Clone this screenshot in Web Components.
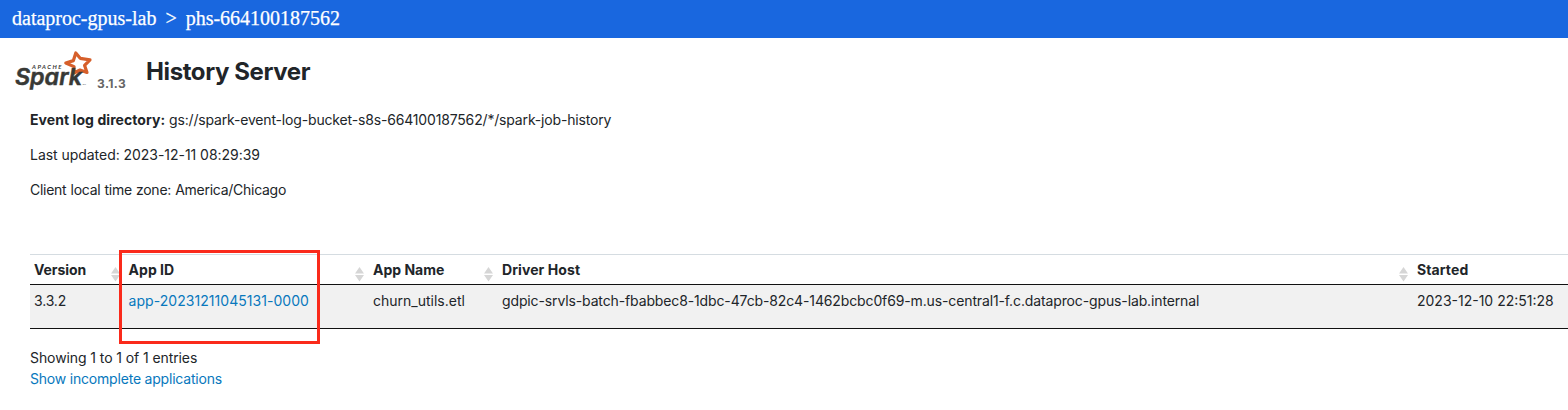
<!DOCTYPE html>
<html lang="en"><head><meta charset="utf-8"><title>History Server</title>
<style>html,body{margin:0;background:#fff;overflow:hidden}body{font:14px/21px Inter,sans-serif;color:#212529}</style></head><body>
<history-page></history-page>
<script>
const define=(name,html)=>customElements.define(name,class extends HTMLElement{constructor(){super();this.attachShadow({mode:'open'}).innerHTML=html}});
define('project-bar',`<style>:host{display:flex;box-sizing:border-box;height:38px;padding:7px 12px 0;background:#1967df;color:#fff;font:20px/22px "Liberation Serif",serif;white-space:pre}span{word-spacing:-.5px;-webkit-text-stroke:.25px #fff}</style><span><slot></slot></span>`);
define('spark-logo',`<style>:host{display:block;width:80px;height:44px}svg{display:block}</style>
<svg width="80" height="44" viewBox="14 49 80 44">
<path d="M75.8 53 L80.2 58.3 L90 59.8 L84.6 65.4 L87 72.4 L80 70 L74 73 L74 66.6 L65.8 63 L73.4 60.6 Z" fill="#fff" stroke="#d65f2b" stroke-width="3.2" stroke-linejoin="round"/>
<g fill="#383936" font-style="italic">
<text x="32" y="68.6" font-family="Lato,sans-serif" font-size="6" font-weight="700" textLength="29.5" lengthAdjust="spacing">APACHE</text>
<text x="15" y="85" font-family="Inter,sans-serif" font-size="22.5" font-weight="600" textLength="67" lengthAdjust="spacingAndGlyphs" style="font-feature-settings:'cv11'" stroke="#383936" stroke-width=".5">Spark</text>
<text x="82.5" y="85.3" font-family="Lato,sans-serif" font-size="2.5">TM</text></g></svg>`);
define('page-heading',`<style>:host{display:flex;height:62px;padding:11px 0 0 14px;box-sizing:border-box}small{font:700 12px/18px Inter,sans-serif;color:#666;margin:26px 0 0 3px;width:49px;letter-spacing:.42px}h1{font:700 24px/29px Inter,sans-serif;margin:8px 0 0;letter-spacing:-.4px;white-space:nowrap}</style><spark-logo></spark-logo><small><slot name="version"></slot></small><h1><slot></slot></h1>`);
define('info-line',`<style>:host{display:block;height:21px;margin-bottom:14px;white-space:pre;letter-spacing:var(--ls,0);word-spacing:var(--ws,0)}::slotted(b){letter-spacing:.07px}</style><slot></slot>`);
define('sort-arrows',`<style>:host{display:block;width:9px;height:15px}svg{display:block}</style><svg width="9" height="15"><path d="M0 6.5L4.5 0 9 6.5ZM0 8H9L4.5 14.5Z" fill="#d6d6d6"/></svg>`);
define('head-cell',`<style>:host{display:flex;justify-content:space-between;font-weight:700;padding:4px 0 0 4px;letter-spacing:var(--ls,0);white-space:nowrap}sort-arrows{margin:8px 5px 0 0}</style><slot></slot><sort-arrows></sort-arrows>`);
define('data-cell',`<style>:host{display:block;padding:5px 0 0 4px;letter-spacing:var(--ls,0);white-space:nowrap}</style><slot></slot>`);
define('app-table',`<style>:host{display:block;position:relative;width:1620px;border-top:1px solid #d5dce1}
.r{display:grid;grid-template-columns:94.5px 244.5px 129px 915px 1fr}.h{height:29px;border-bottom:1px solid #111}.d{height:43px;background:#f1f1f1;border-bottom:1px solid #111}
.mark{position:absolute;left:89px;top:-5px;width:195px;height:88px;border:3px solid #fa2a1b;pointer-events:none}a{color:#0878bd}</style>
<div class="r h"><head-cell style="--ls:-.06px">Version</head-cell><head-cell style="--ls:.05px">App ID</head-cell><head-cell>App Name</head-cell><head-cell style="--ls:.08px">Driver Host</head-cell><head-cell style="--ls:.1px">Started</head-cell></div>
<div class="r d"><data-cell style="--ls:-.15px">3.3.2</data-cell><data-cell style="--ls:.05px"><a>app-20231211045131-0000</a></data-cell><data-cell>churn_utils.etl</data-cell><data-cell style="--ls:-.128px">gdpic-srvls-batch-fbabbec8-1dbc-47cb-82c4-1462bcbc0f69-m.us-central1-f.c.dataproc-gpus-lab.internal</data-cell><data-cell>2023-12-10 22:51:28</data-cell></div><div class="mark"></div>`);
define('table-footer',`<style>:host{display:block;padding-top:18px}div{height:21px}.n{letter-spacing:-.09px}a{color:#0878bd;letter-spacing:-.2px}</style><div class="n">Showing 1 to 1 of 1 entries</div><div><a>Show incomplete applications</a></div>`);
define('history-page',`<style>:host{display:block;width:1568px;height:410px;overflow:hidden}main{padding:9px 0 0 30px}app-table{margin-top:54px}</style>
<project-bar>dataproc-gpus-lab  &gt;  phs-664100187562</project-bar><page-heading><span slot="version">3.1.3</span>History Server</page-heading>
<main><info-line style="--ls:-.168px"><b>Event log directory:</b> gs://spark-event-log-bucket-s8s-664100187562/*/spark-job-history</info-line><info-line style="--ls:-.04px">Last updated: 2023-12-11 08:29:39</info-line><info-line style="--ls:-.265px;--ws:.45px">Client local time zone: America/Chicago</info-line><app-table></app-table><table-footer></table-footer></main>`);
</script></body></html>
